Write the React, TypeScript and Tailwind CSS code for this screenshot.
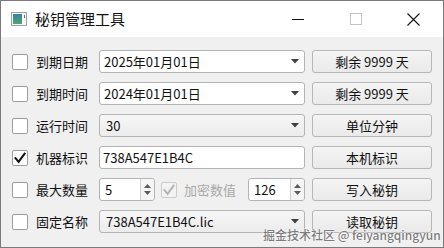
import React from 'react';

const FONT = "font-['Noto_Sans_CJK_SC','Noto_Sans',sans-serif]";

function CheckBox({ checked = false, disabled = false }: { checked?: boolean; disabled?: boolean }) {
  return (
    <div
      className={`w-4 h-4 shrink-0 rounded-[2px] border flex items-center justify-center ${
        disabled ? 'border-[#cccccc] bg-[#f3f3f3]' : 'border-[#9c9c9c] bg-white'
      }`}
    >
      {checked && (
        <svg width="12" height="12" viewBox="0 0 12 12">
          <path
            d="M1.5 6.2 L4.6 9.8 L10.6 1.6"
            fill="none"
            stroke={disabled ? '#b4b4b4' : '#111111'}
            strokeWidth="2"
            strokeLinecap="square"
          />
        </svg>
      )}
    </div>
  );
}

function DropArrow() {
  return (
    <svg width="8" height="5" viewBox="0 0 8 5" className="shrink-0">
      <path d="M0 0 H8 L4 4.5 Z" fill="#404040" />
    </svg>
  );
}

function Combo({ text, editable = true }: { text: string; editable?: boolean }) {
  return (
    <div
      className={`w-[206px] h-[23px] shrink-0 rounded-[3px] border border-[#b4b4b4] flex items-center pl-[4px] pr-[5px] ${
        editable ? 'bg-white' : 'bg-gradient-to-b from-[#f6f6f6] to-[#ececec]'
      }`}
    >
      <span className={`flex-1 text-[13px] text-[#111] ${editable ? '' : 'pl-[2px]'}`}>{text}</span>
      <DropArrow />
    </div>
  );
}

function LineEdit({ text }: { text: string }) {
  return (
    <div className="w-[206px] h-[23px] shrink-0 rounded-[3px] border border-[#b4b4b4] bg-white flex items-center pl-[3px]">
      <span className="text-[13px] text-[#111]">{text}</span>
    </div>
  );
}

function SpinBox({ text, width }: { text: string; width: string }) {
  return (
    <div className={`${width} h-[23px] shrink-0 rounded-[3px] border border-[#b4b4b4] bg-white flex items-stretch`}>
      <span className="flex-1 flex items-center pl-[5px] text-[13px] text-[#111]">{text}</span>
      <div className="w-[14px] border-l border-[#d0d0d0] bg-[#f5f5f5] rounded-r-[3px] flex flex-col items-center justify-center gap-[3px]">
        <svg width="7" height="4" viewBox="0 0 7 4">
          <path d="M0 4 H7 L3.5 0 Z" fill="#5a5a5a" />
        </svg>
        <svg width="7" height="4" viewBox="0 0 7 4">
          <path d="M0 0 H7 L3.5 4 Z" fill="#5a5a5a" />
        </svg>
      </div>
    </div>
  );
}

function Button({ label }: { label: string }) {
  return (
    <div className="w-[120px] h-[23px] shrink-0 rounded-[3px] border border-[#b7b7b7] bg-gradient-to-b from-[#f4f4f4] to-[#eaeaea] flex items-center justify-center text-[13px] text-[#111]">
      {label}
    </div>
  );
}

function Row({ label, checked, children, button }: { label: string; checked?: boolean; children: React.ReactNode; button: string }) {
  return (
    <div className="flex items-center h-[23px]">
      <CheckBox checked={checked} />
      <span className="ml-[8px] w-[52px] text-[13px] text-[#111] whitespace-nowrap">{label}</span>
      <div className="ml-[11px] flex items-center">{children}</div>
      <div className="ml-[7px]">
        <Button label={button} />
      </div>
    </div>
  );
}

export default function App() {
  return (
    <div className={`${FONT} relative w-[444px] h-[248px] border border-[#7a7a7a] bg-[#f0f0f0] flex flex-col overflow-hidden`}>
      {/* title bar */}
      <div className="h-[36px] bg-white flex items-center shrink-0">
        <svg width="16" height="14" viewBox="0 0 16 14" className="ml-[10px]">
          <defs>
            <linearGradient id="ic" x1="0" y1="0" x2="0" y2="1">
              <stop offset="0" stopColor="#3a7fb0" />
              <stop offset="1" stopColor="#4aa86a" />
            </linearGradient>
          </defs>
          <rect x="0.5" y="0.5" width="15" height="13" fill="#f6f6f6" stroke="#a0a0a0" />
          <rect x="2" y="2" width="9" height="10" fill="url(#ic)" />
          <rect x="13" y="3" width="1" height="3" fill="#6a6a6a" />
        </svg>
        <span className="ml-[8px] text-[15px] text-[#111]">秘钥管理工具</span>
        <div className="ml-auto flex items-center h-full">
          <div className="w-[58px] h-full flex items-center justify-center">
            <div className="w-[12px] h-px bg-[#111]" />
          </div>
          <div className="w-[58px] h-full flex items-center justify-center">
            <div className="w-[12px] h-[12px] border border-[#c4c4c4]" />
          </div>
          <div className="w-[58px] h-full flex items-center justify-center pr-[2px]">
            <svg width="13" height="13" viewBox="0 0 13 13">
              <path d="M0.5 0.5 L12.5 12.5 M12.5 0.5 L0.5 12.5" stroke="#111" strokeWidth="1.1" />
            </svg>
          </div>
        </div>
      </div>

      {/* body */}
      <div className="flex flex-col gap-[9px] pl-[11px] pt-[13px]">
        <Row label="到期日期" button="剩余 9999 天">
          <Combo text="2025年01月01日" />
        </Row>
        <Row label="到期时间" button="剩余 9999 天">
          <Combo text="2024年01月01日" />
        </Row>
        <Row label="运行时间" button="单位分钟">
          <Combo text="30" editable={false} />
        </Row>
        <Row label="机器标识" checked button="本机标识">
          <LineEdit text="738A547E1B4C" />
        </Row>
        <Row label="最大数量" button="写入秘钥">
          <div className="w-[206px] flex items-center">
            <SpinBox text="5" width="w-[56px]" />
            <div className="ml-[6px]">
              <CheckBox checked disabled />
            </div>
            <span className="ml-[7px] text-[13px] text-[#a8a8a8]">加密数值</span>
            <div className="ml-auto">
              <SpinBox text="126" width="w-[57px]" />
            </div>
          </div>
        </Row>
        <Row label="固定名称" button="读取秘钥">
          <Combo text="738A547E1B4C.lic" editable={false} />
        </Row>
      </div>

      {/* watermark */}
      <span className="absolute left-[262px] top-[225px] text-[12px] font-medium text-[#7c7c7c] whitespace-nowrap [text-shadow:0_0_2px_#ffffff,0_0_1px_#ffffff,0_0_1px_#ffffff]">
        掘金技术社区 @ feiyangqingyun
      </span>
    </div>
  );
}
